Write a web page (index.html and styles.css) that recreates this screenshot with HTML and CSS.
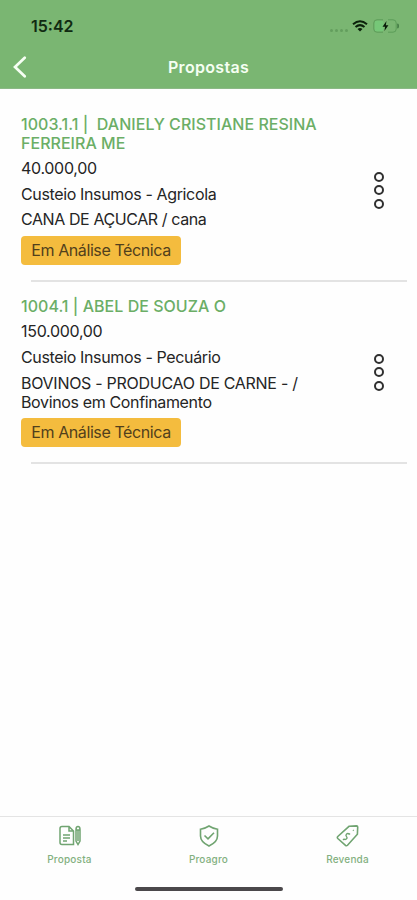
FILE: index.html
```
<!DOCTYPE html>
<html lang="pt-BR">
<head>
<meta charset="utf-8">
<meta name="viewport" content="width=device-width, initial-scale=1">
<title>Propostas</title>
<link rel="stylesheet" href="styles.css">
</head>
<body>
<div class="app">
  <header class="header">
    <div class="status">
      <span class="time">15:42</span>
      <div class="indicators">
        <span class="signal"><i></i><i></i><i></i><i></i></span>
        <svg class="wifi" width="16" height="12" viewBox="0 0 16 12"><path d="M1 4.300Q8-1.700 15 4.300M3.500 7Q8 3.200 12.500 7" fill="none" stroke="#0b210b" stroke-width="2"/><path d="M5.500 9Q8 7 10.500 9L8 11.600Z" fill="#0b210b"/></svg>
        <svg class="battery" width="27" height="14" viewBox="0 0 27 14"><rect x="1.500" y="1.500" width="9" height="11" rx="2" fill="#76c778"/><path d="M10 .8H4Q.8.800.8 4v6q0 3.200 3.200 3.200h6M15 .8h5q3.200 0 3.200 3.200v6q0 3.200-3.200 3.200h-5" fill="none" stroke="#5c9d59"/><path d="M24.800 4.800q1.700 2.200 0 4.400z" fill="#477f48" stroke="#477f48"/><path d="M13.500 2 9.500 7.700h2.600L11.400 12l4-5.700h-2.600z" fill="#081b09"/></svg>
      </div>
    </div>
    <nav class="titlebar">
      <svg class="back" width="14" height="22" viewBox="0 0 14 22"><path d="M11.700 1.700 2 11l9.700 9.300" fill="none" stroke="#f7fff4" stroke-width="2.700" stroke-linecap="round"/></svg>
      <h1>Propostas</h1>
    </nav>
  </header>
  <main class="list">
    <article class="item">
      <div class="details">
        <h2>1003.1.1 |&nbsp; DANIELY CRISTIANE RESINA<br>FERREIRA ME</h2>
        <p class="amount">40.000,00</p>
        <p>Custeio Insumos - Agricola</p>
        <p class="crop">CANA DE AÇUCAR / cana</p>
        <span class="badge">Em Análise Técnica</span>
      </div>
      <div class="more"><i></i><i></i><i></i></div>
    </article>
    <article class="item">
      <div class="details">
        <h2>1004.1 | ABEL DE SOUZA O</h2>
        <p class="amount">150.000,00</p>
        <p>Custeio Insumos - Pecuário</p>
        <p class="herd"><span class="cattle">BOVINOS - PRODUCAO DE CARNE - /</span><br>Bovinos em Confinamento</p>
        <span class="badge">Em Análise Técnica</span>
      </div>
      <div class="more"><i></i><i></i><i></i></div>
    </article>
  </main>
  <footer class="tabs">
    <div class="tab">
      <svg width="24" height="22" viewBox="0 0 24 22" fill="none" stroke="#70a471" stroke-width="1.500"><path d="M4 1.500h7l4.500 4.500v13.500H4q-2 0-2-2v-14q0-2 2-2zM11 1.500V6h4.500M5 10h7M5 13h7M5 16h4"/><path d="M18 4.500V16l2 3.500 2-3.500V4.500q0-3-2-3t-2 3zM18 5h4M20 5v11"/></svg>
      <span>Proposta</span>
    </div>
    <div class="tab">
      <svg width="22" height="22" viewBox="0 0 22 22" fill="none" stroke="#70a471" stroke-width="1.600"><path d="M11 1Q7 3.600 2.500 4.200V11q0 6 8.500 10 8.500-4 8.500-10V4.200Q15 3.600 11 1z"/><path d="m6.500 10.500 3.500 3.300 6-6"/></svg>
      <span>Proagro</span>
    </div>
    <div class="tab">
      <svg width="24" height="22" viewBox="0 0 24 22" fill="none" stroke="#70a471" stroke-width="1.600"><path d="M13 1.300 20.500.9q1.200 0 1.200 1.200l-.3 7.200L11.500 20.200q-1 1-2 .1L1.800 13.500q-1-1 0-2z"/><path stroke-width="1.400" d="M13.300 9.300q-1.400-1.400-2.700-.2t-.1 2.500-.2 2.400-2.700-.3M14 8.600l-1 1M8 14l-1 1"/><circle cx="17.300" cy="5.300" r=".3" stroke-width="1"/></svg>
      <span>Revenda</span>
    </div>
  </footer>
  <div class="home"><i></i></div>
</div>
</body>
</html>
```
FILE: styles.css
```
* { box-sizing: border-box; }
body { margin: 0; background: #fefefe; color: #252525; font: 16px/19px Inter, "Liberation Sans", sans-serif; }
h1, h2, p { margin: 0; font-size: 16px; font-weight: 400; }
svg { display: block; }
.app { width: 417px; height: 900px; display: flex; flex-direction: column; }
.header { height: 89px; background: #7ab672; border-bottom: 1px solid #8bb986; }
.status { height: 47px; padding: 5px 17px 0 31px; display: flex; justify-content: space-between; align-items: center; }
.time { font-weight: 600; color: #102a11; }
.indicators { display: flex; align-items: center; gap: 5px; }
.signal { display: flex; gap: 2px; padding-top: 8px; margin-right: -1px; }
.signal i { width: 3px; height: 3px; border-radius: 50%; background: #639e5e; }
.titlebar { height: 40px; display: grid; grid-template-columns: 60px 1fr 60px; align-items: center; }
.back { margin-left: 13px; }
.titlebar h1 { text-align: center; color: #f5fff2; font-weight: 600; letter-spacing: .3px; }
.list { flex: 1; padding: 26px 10px 0 21px; }
.item { display: flex; justify-content: space-between; position: relative; padding-bottom: 16px; margin-bottom: 16px; }
.item::after { content: ""; position: absolute; left: 10px; right: 0; bottom: -1px; height: 2px; background: #e3e3e3; }
.details { display: flex; flex-direction: column; align-items: flex-start; gap: 6.5px; white-space: nowrap; }
.details h2 { color: #6bae66; font-weight: 500; letter-spacing: .03px; }
.details p { letter-spacing: -.36px; position: relative; top: -.5px; }
.details .amount { letter-spacing: -.3px; }
.details .crop { letter-spacing: -.41px; }
.details .herd { top: .5px; }
.cattle { letter-spacing: -.28px; }
.badge { height: 29px; width: 160px; text-align: center; line-height: 29px; letter-spacing: -.4px; background: #f4bc3e; color: #51401c; border-radius: 4px; }
.more { align-self: center; width: 10px; margin-right: 23px; display: flex; flex-direction: column; gap: 3.5px; }
.more i { width: 10px; height: 10px; border: 2px solid #303030; border-radius: 50%; }
.tabs { height: 60px; border-top: 1px solid #e4e4e4; display: grid; grid-template-columns: repeat(3, 1fr); padding-top: 8px; }
.tab { display: flex; flex-direction: column; align-items: center; gap: 5px; color: #83b080; font-size: 10px; font-weight: 500; line-height: 14px; letter-spacing: .2px; }
.home { height: 24px; display: flex; justify-content: center; padding-top: 11px; }
.home i { width: 148px; height: 4px; border-radius: 2px; background: #4b484b; }
```
